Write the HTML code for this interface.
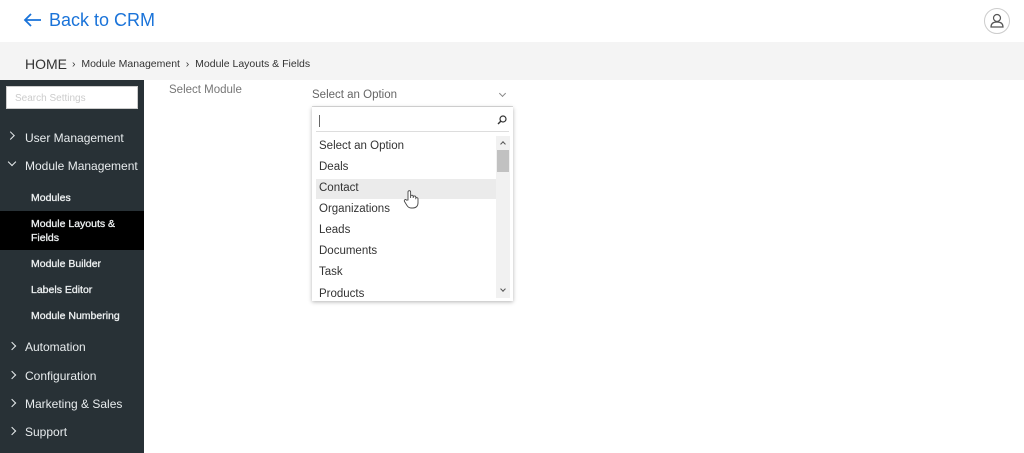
<!DOCTYPE html>
<html><head><style>
*{margin:0;padding:0;box-sizing:border-box}
body{width:1024px;height:453px;overflow:hidden;background:#fff;font-family:"Liberation Sans",sans-serif;position:relative}
.a{position:absolute}
.side{left:0;top:80px;width:144px;height:373px;background:#283136}
.mi{position:absolute;left:25px;color:#e8ecee;font-size:12px;white-space:nowrap}
.sub{position:absolute;left:31px;color:#eef1f2;font-size:10.5px;white-space:nowrap;-webkit-text-stroke:0.3px #eef1f2}
.chev{position:absolute;left:9px;width:6px;height:6px;border-right:1.3px solid #e8ecee;border-top:1.3px solid #e8ecee;transform:rotate(45deg)}
.opt{position:absolute;left:7px;font-size:11.5px;color:#333}
</style></head><body>
<div class="a" style="left:23px;top:10px;color:#1a73d9;font-size:18px">
<svg width="20" height="16" style="vertical-align:-2px;margin-right:6px" viewBox="0 0 20 16"><path d="M18 8H2M8 2L2 8l6 6" fill="none" stroke="#1a73d9" stroke-width="1.8"/></svg>Back to CRM</div>
<div class="a" style="left:984px;top:8px;width:26px;height:26px;border:1px solid #ccc;border-radius:50%">
<svg width="24" height="24" viewBox="0 0 24 24"><circle cx="12" cy="9" r="3.5" fill="none" stroke="#555" stroke-width="1.2"/><path d="M6 18c0-3.5 2.5-5 6-5s6 1.5 6 5z" fill="none" stroke="#555" stroke-width="1.2"/></svg></div>
<div class="a" style="left:0;top:42px;width:1024px;height:38px;background:#f4f4f4"></div>
<div class="a" style="left:25px;top:56px;font-size:14px;color:#333">HOME</div>
<div class="a" style="left:72px;top:58px;font-size:10.5px;color:#333">›&nbsp; Module Management &nbsp;›&nbsp; Module Layouts &amp; Fields</div>
<div class="a side">
<div class="a" style="left:6px;top:6px;width:132px;height:23px;background:#fff;border:1px solid #ccc;font-size:10px;color:#ccc;padding:6px 8px">Search Settings</div>
<div class="chev" style="top:54px;transform:rotate(45deg) translateX(-2px)"></div><div class="mi" style="top:51px">User Management</div>
<div class="chev" style="top:79px;transform:rotate(135deg)"></div><div class="mi" style="top:79px">Module Management</div>
<div class="sub" style="top:112px">Modules</div>
<div class="a" style="left:0;top:131px;width:144px;height:39px;background:#000"></div>
<div class="sub" style="top:137px;line-height:14px">Module Layouts &amp;<br>Fields</div>
<div class="sub" style="top:178px">Module Builder</div>
<div class="sub" style="top:204px">Labels Editor</div>
<div class="sub" style="top:230px">Module Numbering</div>
<div class="chev" style="top:263px"></div><div class="mi" style="top:260px">Automation</div>
<div class="chev" style="top:292px"></div><div class="mi" style="top:289px">Configuration</div>
<div class="chev" style="top:320px"></div><div class="mi" style="top:317px">Marketing &amp; Sales</div>
<div class="chev" style="top:348px"></div><div class="mi" style="top:345px">Support</div>
</div>
<div class="a" style="left:169px;top:84px;font-size:11.5px;color:#777">Select Module</div>
<div class="a" style="left:312px;top:89px;font-size:11.5px;color:#666">Select an Option</div>
<div class="a" style="left:500px;top:91px;width:5px;height:5px;border-right:1px solid #888;border-bottom:1px solid #888;transform:rotate(45deg)"></div>
<div class="a" style="left:312px;top:106px;width:201px;height:1px;background:#ddd"></div>
<div class="a" style="left:312px;top:107px;width:201px;height:194px;background:#fff;box-shadow:0 1px 4px rgba(0,0,0,.3);overflow:hidden">
<div class="a" style="left:4px;top:24px;width:193px;height:1px;background:#ddd"></div>
<div class="a" style="left:7px;top:8px;width:1px;height:12px;background:#666"></div>
<svg class="a" style="left:185px;top:8px" width="10" height="10" viewBox="0 0 10 10"><circle cx="6" cy="4" r="3" fill="none" stroke="#333" stroke-width="1.2"/><path d="M4 6L1 9" stroke="#333" stroke-width="1.4"/></svg>
<div class="a" style="left:4px;top:72px;width:180px;height:20px;background:#ebebeb"></div>
<div class="opt" style="top:33px">Select an Option</div>
<div class="opt" style="top:54px">Deals</div>
<div class="opt" style="top:75px">Contact</div>
<div class="opt" style="top:96px">Organizations</div>
<div class="opt" style="top:117px">Leads</div>
<div class="opt" style="top:138px">Documents</div>
<div class="opt" style="top:159px">Task</div>
<div class="opt" style="top:181px">Products</div>
<div class="a" style="left:184px;top:29px;width:14px;height:162px;background:#f1f1f1"></div>
<div class="a" style="left:185px;top:43px;width:12px;height:22px;background:#c1c1c1"></div>
<div class="a" style="left:189px;top:35px;width:4px;height:4px;border-left:1px solid #555;border-top:1px solid #555;transform:rotate(45deg)"></div>
<div class="a" style="left:189px;top:180px;width:4px;height:4px;border-right:1px solid #555;border-bottom:1px solid #555;transform:rotate(45deg)"></div>
</div>
<svg class="a" style="left:403px;top:189px" width="16" height="20" viewBox="0 0 16 20"><path d="M5 11V3a1.3 1.3 0 0 1 2.6 0v6V7.5a1.3 1.3 0 0 1 2.6 0V9v-.8a1.3 1.3 0 0 1 2.6 0v1a1.2 1.2 0 0 1 2.2.4V14c0 3-2 5-5 5H8c-2 0-3-1-4-2.5L1.5 12.5a1.2 1.2 0 0 1 2-1.4z" fill="#fff" stroke="#444" stroke-width="0.9"/></svg>
</body></html>
